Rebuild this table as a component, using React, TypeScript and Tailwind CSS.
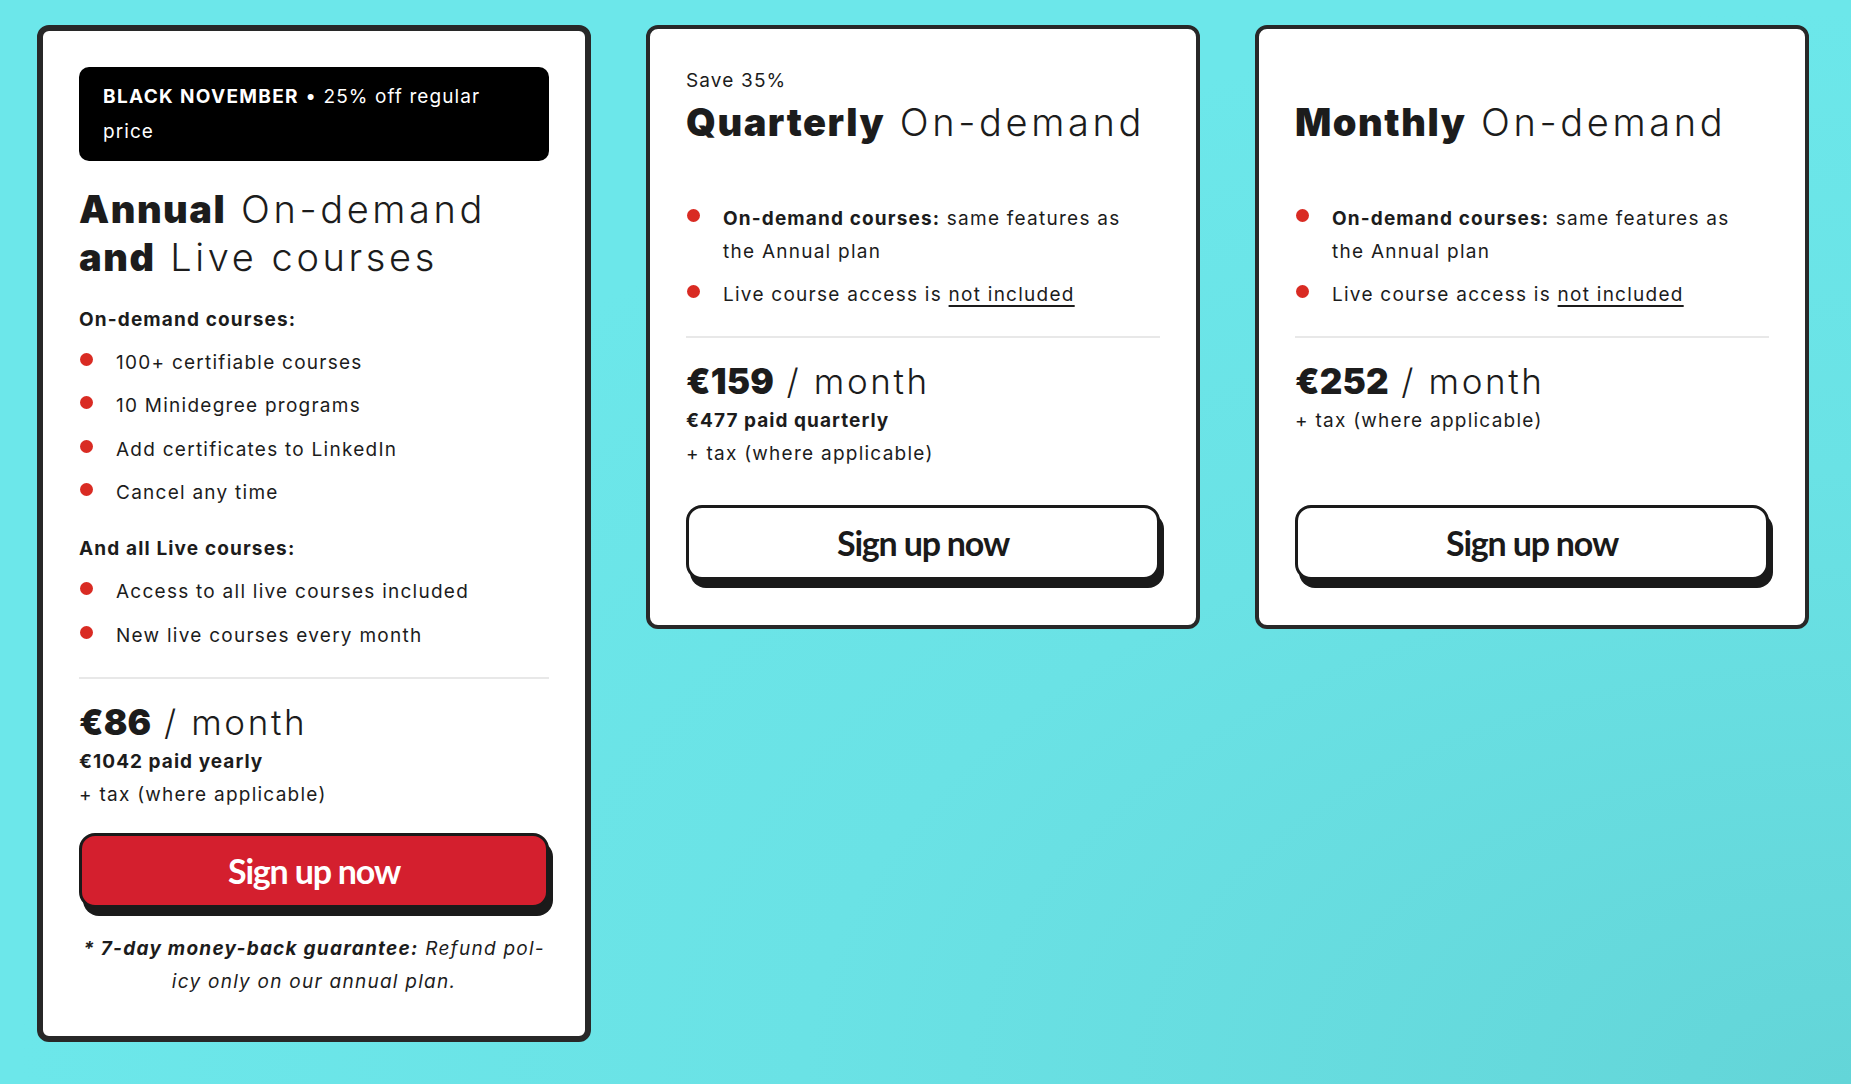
import React from "react";

const bodyFont = "font-['Inter','Noto_Sans',sans-serif]";

function Dot() {
  return <span className="ml-px mt-[7px] h-[13px] w-[13px] flex-shrink-0 rounded-full bg-[#d92b23]" />;
}

function Item({ children }: { children: React.ReactNode }) {
  return (
    <li className="flex gap-[23px] text-[19px] leading-[33px] tracking-[0.066em]">
      <Dot />
      <span>{children}</span>
    </li>
  );
}

function SignUp({ red }: { red?: boolean }) {
  return (
    <button
      className={
        "flex h-[75px] w-full items-center justify-center rounded-[16px] border-[3px] border-[#1a1a1a] font-['Lato',sans-serif] text-[34px] font-bold tracking-[-0.035em] shadow-[4px_8px_0_#1a1a1a] " +
        (red ? "bg-[#d41f2e] text-white" : "bg-white text-[#1a1a1a]")
      }
    >
      Sign up now
    </button>
  );
}

function Heading({ bold, light }: { bold: string; light: string }) {
  return (
    <>
      <span className="font-black tracking-[0.04em]">{bold}</span>{" "}
      <span className="ml-[4px] font-light tracking-[0.095em]">{light}</span>
    </>
  );
}

function Price({ amount }: { amount: string }) {
  return (
    <p className="text-[35px] leading-[46px]">
      <span className="font-black tracking-[0.005em]">{amount}</span>
      <span className="font-light tracking-[0.075em]"> / month</span>
    </p>
  );
}

function AnnualCard() {
  return (
    <div className="rounded-[12px] border-[6px] border-[#282828] bg-white px-[36px] pt-[36px] pb-[38px]">
      <div className="rounded-[10px] bg-black px-[24px] py-[12px] text-[19px] leading-[35px] tracking-[0.057em] text-white">
        <span className="font-bold tracking-[0.07em]">BLACK NOVEMBER</span> • 25% off regular
        <br />
        price
      </div>
      <h2 className="mt-[24px] text-[38px] leading-[48px]">
        <Heading bold="Annual" light="On-demand" />
        <br />
        <Heading bold="and" light="Live courses" />
      </h2>
      <p className="mt-[22px] text-[19px] font-bold leading-[33px] tracking-[0.06em]">On-demand courses:</p>
      <ul className="mt-[10px] flex flex-col gap-[10.3px]">
        <Item>100+ certifiable courses</Item>
        <Item>10 Minidegree programs</Item>
        <Item>Add certificates to LinkedIn</Item>
        <Item>Cancel any time</Item>
      </ul>
      <p className="mt-[23px] text-[19px] font-bold leading-[33px] tracking-[0.06em]">And all Live courses:</p>
      <ul className="mt-[10px] flex flex-col gap-[11px]">
        <Item>Access to all live courses included</Item>
        <Item>New live courses every month</Item>
      </ul>
      <hr className="mt-[25px] border-0 border-t-2 border-[#e8e8e8]" />
      <div className="mt-[20px]">
        <Price amount="€86" />
        <p className="text-[19px] font-bold leading-[33px] tracking-[0.055em]">€1042 paid yearly</p>
        <p className="text-[19px] leading-[33px] tracking-[0.066em]">+ tax (where applicable)</p>
      </div>
      <div className="mt-[22px]">
        <SignUp red />
      </div>
      <p className="mt-[24px] text-center text-[19px] italic leading-[33px] tracking-[0.066em]">
        <span className="font-bold">* 7-day money-back guarantee:</span> Refund pol-
        <br />
        icy only on our annual plan.
      </p>
    </div>
  );
}

function PlanCard({
  save,
  bold,
  price,
  paid,
}: {
  save?: string;
  bold: string;
  price: string;
  paid?: string;
}) {
  return (
    <div className="rounded-[12px] border-[4px] border-[#282828] bg-white px-[36px] pt-[38px] pb-[45px]">
      <p className="h-[28px] text-[19px] leading-[28px] tracking-[0.06em]">{save}</p>
      <h2 className="mt-[3px] text-[38px] leading-[48px]">
        <Heading bold={bold} light="On-demand" />
      </h2>
      <ul className="mt-[56px] flex flex-col gap-[10px] pr-[12px]">
        <Item>
          <span className="font-bold tracking-[0.06em]">On-demand courses:</span> same features as the Annual plan
        </Item>
        <Item>
          Live course access is{" "}
          <span className="underline decoration-[1.5px] underline-offset-[4px]">not included</span>
        </Item>
      </ul>
      <hr className="mt-[25px] border-0 border-t-2 border-[#e8e8e8]" />
      <div className="mt-[20px] min-h-[112px]">
        <Price amount={price} />
        {paid && <p className="text-[19px] font-bold leading-[33px] tracking-[0.055em]">{paid}</p>}
        <p className="text-[19px] leading-[33px] tracking-[0.066em]">+ tax (where applicable)</p>
      </div>
      <div className="mt-[35px]">
        <SignUp />
      </div>
    </div>
  );
}

export default function App() {
  return (
    <div
      className={
        "min-h-screen w-full bg-[#6ce7ea] bg-[radial-gradient(ellipse_at_100%_100%,#63d5d8_0%,#6ae2e5_40%,#6ce7ea_70%)] pl-[37px] pt-[25px] text-[#1c1c1c] " +
        bodyFont
      }
    >
      <div className="grid grid-cols-[554px_554px_554px] items-start gap-x-[55px]">
        <AnnualCard />
        <PlanCard save="Save 35%" bold="Quarterly" price="€159" paid="€477 paid quarterly" />
        <PlanCard bold="Monthly" price="€252" />
      </div>
    </div>
  );
}
